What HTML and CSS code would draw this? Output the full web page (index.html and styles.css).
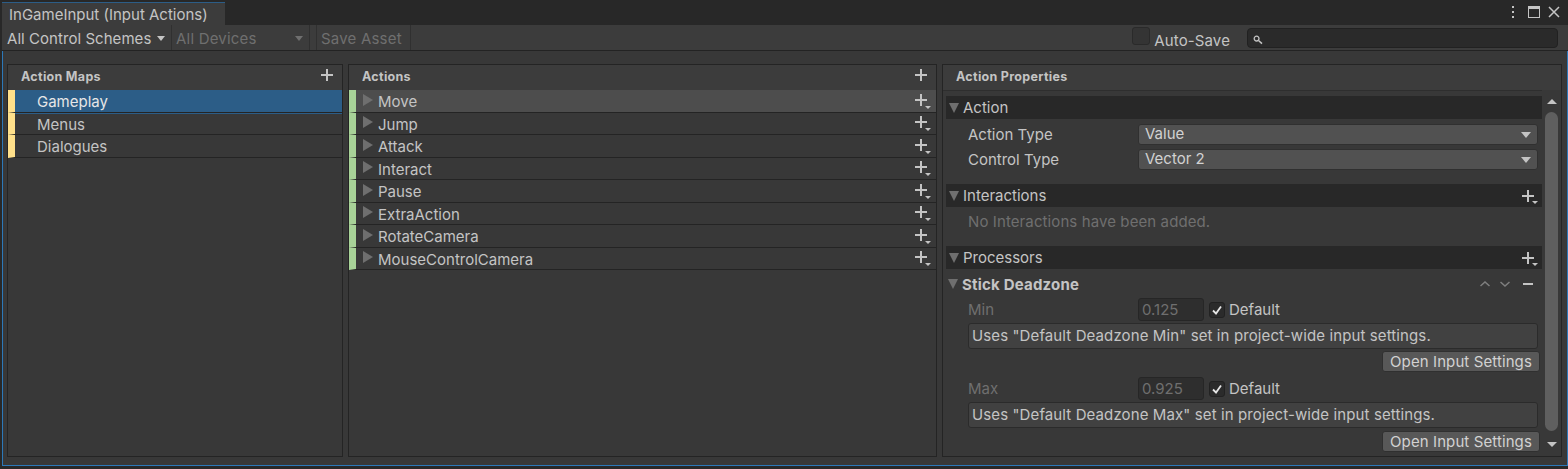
FILE: index.html
```html
<!DOCTYPE html>
<html lang="en">
<head>
  <meta charset="UTF-8">
  <title>InGameInput (Input Actions)</title>
  <link rel="stylesheet" href="styles.css">
</head>
<body>
  <div class="window">
    <div class="tabbar">
      <div class="tab">InGameInput (Input Actions)</div>
      <div class="win-icons">
        <svg class="dots" width="4" height="12" viewBox="0 0 4 12"><rect x="1" y="0" width="2" height="2" fill="#c4c4c4"/><rect x="1" y="5" width="2" height="2" fill="#c4c4c4"/><rect x="1" y="10" width="2" height="2" fill="#c4c4c4"/></svg>
        <svg width="12" height="12" viewBox="0 0 12 12"><rect x="0.5" y="0.5" width="11" height="11" fill="none" stroke="#c4c4c4"/><rect x="0" y="0" width="12" height="3" fill="#c4c4c4"/></svg>
        <svg width="12" height="12" viewBox="0 0 12 12"><path d="M1 1L11 11M11 1L1 11" stroke="#c4c4c4" stroke-width="1.5" fill="none"/></svg>
      </div>
    </div>

    <div class="toolbar">
      <div class="tool tool-schemes">All Control Schemes<i class="caret"></i></div>
      <div class="tool tool-devices off">All Devices<i class="caret dim"></i></div>
      <div class="tool tool-save off">Save Asset</div>
      <div class="autosave"><span class="box"></span><span class="autosave-label">Auto-Save</span></div>
      <div class="search">
        <svg width="10" height="10" viewBox="0 0 10 10"><circle cx="3.6" cy="3.6" r="2.4" fill="none" stroke="#c4c4c4" stroke-width="1.3"/><path d="M5.5 5.5L9 8.6" stroke="#c4c4c4" stroke-width="1.6"/></svg>
      </div>
    </div>

    <div class="panels">
      <section class="panel maps">
        <div class="panel-head"><span>Action Maps</span><span class="plus"></span></div>
        <div class="row map selected">Gameplay</div>
        <div class="row map">Menus</div>
        <div class="row map">Dialogues</div>
      </section>

      <section class="panel actions">
        <div class="panel-head"><span>Actions</span><span class="plus"></span></div>
        <div class="row action hover"><i class="arrow"></i>Move<span class="plus small"></span></div>
        <div class="row action"><i class="arrow"></i>Jump<span class="plus small"></span></div>
        <div class="row action"><i class="arrow"></i>Attack<span class="plus small"></span></div>
        <div class="row action"><i class="arrow"></i>Interact<span class="plus small"></span></div>
        <div class="row action"><i class="arrow"></i>Pause<span class="plus small"></span></div>
        <div class="row action"><i class="arrow"></i>ExtraAction<span class="plus small"></span></div>
        <div class="row action"><i class="arrow"></i>RotateCamera<span class="plus small"></span></div>
        <div class="row action"><i class="arrow"></i>MouseControlCamera<span class="plus small"></span></div>
      </section>

      <section class="panel props">
        <div class="panel-head"><span>Action Properties</span></div>
        <div class="props-body">
          <div class="props-scroll">
            <div class="foldbar"><i class="arrow down"></i>Action</div>
            <div class="field first"><label>Action Type</label><div class="select">Value<i class="caret"></i></div></div>
            <div class="field"><label>Control Type</label><div class="select">Vector 2<i class="caret"></i></div></div>

            <div class="foldbar bar-interactions"><i class="arrow down"></i>Interactions<span class="plus small"></span></div>
            <div class="none-msg">No Interactions have been added.</div>

            <div class="foldbar bar-processors"><i class="arrow down"></i>Processors<span class="plus small"></span></div>
            <div class="processor">
              <i class="arrow down"></i><b>Stick Deadzone</b>
              <div class="proc-btns">
                <svg width="10" height="6" viewBox="0 0 10 6"><path d="M0.5 5L5 1L9.5 5" fill="none" stroke="#7f7f7f" stroke-width="1.5"/></svg>
                <svg width="10" height="6" viewBox="0 0 10 6"><path d="M0.5 1L5 5L9.5 1" fill="none" stroke="#7f7f7f" stroke-width="1.5"/></svg>
                <svg class="minus" width="10" height="2" viewBox="0 0 10 2"><rect width="10" height="2" fill="#c4c4c4"/></svg>
              </div>
            </div>

            <div class="param">
              <label class="off">Min</label>
              <div class="num off">0.125</div>
              <span class="check"><svg width="12" height="12" viewBox="0 0 12 12"><path d="M2 6.5L5 9.5L10 2.5" fill="none" stroke="#e6e6e6" stroke-width="1.8"/></svg></span>
              <span>Default</span>
            </div>
            <div class="help">Uses "Default Deadzone Min" set in project-wide input settings.</div>
            <div class="btn-line"><div class="btn">Open Input Settings</div></div>

            <div class="param param-max">
              <label class="off">Max</label>
              <div class="num off">0.925</div>
              <span class="check"><svg width="12" height="12" viewBox="0 0 12 12"><path d="M2 6.5L5 9.5L10 2.5" fill="none" stroke="#e6e6e6" stroke-width="1.8"/></svg></span>
              <span>Default</span>
            </div>
            <div class="help">Uses "Default Deadzone Max" set in project-wide input settings.</div>
            <div class="btn-line last"><div class="btn">Open Input Settings</div></div>
          </div>
          <div class="scrollbar">
            <i class="sb-up"></i>
            <div class="thumb"></div>
            <i class="sb-down"></i>
          </div>
        </div>
      </section>
    </div>
  </div>
</body>
</html>
```

FILE: styles.css
```css
* {
  box-sizing: border-box;
}
html, body {
  margin: 0;
  height: 100%;
  overflow: hidden;
  background: #282828;
}
body {
  font-family: Inter, "Liberation Sans", sans-serif;
  font-size: 15px;
  color: #c4c4c4;
}
.window {
  width: 1568px;
  height: 466px;
  margin: 0;
  border-left: 2px solid #282828;
  display: flex;
  flex-direction: column;
  background: #383838;
  box-shadow: inset 1px 0 0 #2c78b8, inset -1px 0 0 #2c78b8, inset 0 -1px 0 #2c78b8;
}
.tabbar {
  height: 25px;
  flex: none;
  background: #282828;
  display: flex;
  align-items: flex-end;
  padding-right: 8px;
}
.tab {
  width: 223px;
  height: 23px;
  background: #3c3c3c;
  border-top: 1px solid #2c5d87;
  padding: 2px 0 0 7px;
  line-height: 20px;
}
.win-icons {
  margin-left: auto;
  align-self: flex-start;
  display: flex;
  align-items: center;
  gap: 8px;
  padding-top: 6px;
}
.dots {
  margin-right: 5px;
}
.toolbar {
  height: 26px;
  flex: none;
  background: #3c3c3c;
  border-bottom: 1px solid #232323;
  display: flex;
  align-items: stretch;
  padding-right: 10px;
}
.tool {
  padding: 2px 0 0 5px;
  line-height: 24px;
  display: flex;
  align-items: center;
  border-right: 1px solid #303030;
}
.tool-schemes {
  width: 170px;
  letter-spacing: 0.05px;
}
.tool-devices {
  width: 138px;
  padding-left: 4px;
  letter-spacing: 0.2px;
  border-right: 1px solid #303030;
}
.tool-save {
  margin-left: 6px;
  width: 95px;
  padding-left: 4px;
  letter-spacing: 0.2px;
  border-left: 1px solid #303030;
}
.off {
  color: #6f6f6f;
}
.caret {
  display: inline-block;
  flex: none;
  width: 0;
  height: 0;
  border-left: 5px solid transparent;
  border-right: 5px solid transparent;
  border-top: 6px solid #c4c4c4;
  margin-left: auto;
  margin-right: 4px;
}
.tool .caret {
  border-left-width: 4.5px;
  border-right-width: 4.5px;
  border-top-width: 5px;
  margin-right: 6px;
}
.caret.dim {
  border-top-color: #6f6f6f;
}
.autosave {
  margin-left: auto;
  display: flex;
  align-items: flex-start;
}
.box {
  width: 18px;
  height: 18px;
  margin-top: 2px;
  border: 1px solid #2a2a2a;
  border-radius: 3px;
  background: #343434;
}
.autosave-label {
  margin-left: 4px;
  line-height: 26px;
  padding-top: 3px;
  letter-spacing: 0.12px;
}
.search {
  width: 311px;
  height: 20px;
  margin: 3px 0 0 17px;
  background: #2a2a2a;
  border: 1px solid #212121;
  border-radius: 4px;
  padding: 1px 0 0 5px;
}
.panels {
  display: flex;
  gap: 5px;
  padding: 13px 5px 8px 5px;
  height: 392px;
  flex: none;
  margin-bottom: 0;
}
.panel {
  border: 1px solid #242424;
  background: #383838;
  display: flex;
  flex-direction: column;
  height: 393px;
}
.maps {
  width: 336px;
}
.actions {
  width: 589px;
}
.props {
  width: 620px;
}
.panel-head {
  height: 25.25px;
  flex: none;
  background: #3c3c3c;
  font-size: 12.5px;
  font-weight: 700;
  display: flex;
  align-items: center;
  justify-content: space-between;
  padding: 0 9px 2px 13px;
  color: #c4c4c4;
  letter-spacing: 0.3px;
}
.plus {
  width: 12px;
  height: 12px;
  flex: none;
  margin-top: -3px;
  background:
    linear-gradient(#c4c4c4, #c4c4c4) center / 12px 2px no-repeat,
    linear-gradient(#c4c4c4, #c4c4c4) center / 2px 12px no-repeat;
}
.plus.small {
  position: relative;
  margin: -4px 9px 0 auto;
}
.plus.small::after {
  content: "";
  position: absolute;
  left: 10px;
  top: 12px;
  border-left: 3px solid transparent;
  border-right: 3px solid transparent;
  border-top: 3px solid #c4c4c4;
}
.row {
  height: 22.5px;
  flex: none;
  display: flex;
  align-items: center;
  border-left: 7px solid #ffe08a;
  border-bottom: 1px solid #242424;
  padding-bottom: 0;
}
.map {
  padding-left: 22px;
  padding-top: 1px;
}
.map.selected {
  background: #2c5d87;
  color: #e6e6e6;
  box-shadow: 0 1px 0 #2c5d87;
}
.action {
  border-left-color: #a8d398;
  padding-left: 7px;
  padding-top: 1px;
}
.action.hover {
  background: #4d4d4d;
}
.arrow {
  width: 0;
  height: 0;
  flex: none;
  border-top: 6px solid transparent;
  border-bottom: 6px solid transparent;
  border-left: 10px solid #6f6f6f;
  margin: -4px 5px 0 0;
}
.arrow.down {
  border-left: 5.5px solid transparent;
  border-right: 5.5px solid transparent;
  border-top: 10px solid #6f6f6f;
  border-bottom: 0;
  margin: 0 4px 0 0;
}
.props-body {
  flex: 1;
  display: flex;
  min-height: 0;
}
.props-scroll {
  width: 599px;
  padding: 5px 0 0 3px;
  border-top: 1px solid #2e2e2e;
}
.foldbar {
  height: 23px;
  background: #282828;
  display: flex;
  align-items: center;
  padding-left: 3px;
}
.foldbar .plus.small {
  margin: 0 8px 0 auto;
}
.foldbar .plus.small::after {
  top: 11px;
}
.field {
  height: 21px;
  margin-top: 4px;
  display: flex;
  align-items: center;
  padding-left: 22px;
}
.field.first {
  margin-top: 5px;
}
.field label {
  width: 170px;
}
.select {
  width: 400px;
  height: 21px;
  background: #515151;
  border: 1px solid #303030;
  border-radius: 3px;
  padding: 0 6px 2px 6px;
  color: #d2d2d2;
  display: flex;
  align-items: center;
}
.select .caret {
  margin-right: 0;
  margin-top: 2px;
}
.bar-interactions {
  margin-top: 14px;
}
.none-msg {
  height: 30px;
  line-height: 30px;
  padding-left: 22px;
  color: #6f6f6f;
  letter-spacing: 0.1px;
}
.bar-processors {
  margin-top: 9px;
}
.processor {
  height: 29px;
  display: flex;
  align-items: center;
  padding: 1px 0 0 2px;
}
.processor b {
  font-weight: 700;
  letter-spacing: 0.2px;
}
.proc-btns {
  margin-left: auto;
  margin-right: 9px;
  display: flex;
  align-items: center;
  gap: 10px;
}
.minus {
  margin-left: 3px;
}
.param {
  height: 23px;
  margin-top: 0;
  display: flex;
  align-items: center;
  padding-left: 22px;
}
.param label {
  width: 170px;
}
.param-max {
  margin-top: 5px;
}
.num {
  width: 66px;
  height: 23px;
  background: #2e2e2e;
  border: 1px solid #262626;
  border-radius: 3px;
  padding-left: 3px;
  line-height: 21px;
}
.check {
  width: 16px;
  height: 16px;
  margin: 0 4px 0 5px;
  background: #2b2b2b;
  border: 1px solid #222;
  border-radius: 3px;
  display: flex;
  align-items: center;
  justify-content: center;
}
.help {
  height: 26px;
  margin: 2px 4px 0 22px;
  background: #414141;
  border: 1px solid #2b2b2b;
  border-radius: 3px;
  padding-left: 3px;
  line-height: 24px;
  letter-spacing: 0.11px;
}
.btn-line {
  display: flex;
  justify-content: flex-end;
  margin: 2px 2px 0 0;
}
.btn-line.last {
  margin-top: 3px;
}
.btn {
  width: 158px;
  height: 21px;
  background: #585858;
  border: 1px solid #303030;
  border-radius: 3px;
  color: #d2d2d2;
  text-align: center;
  line-height: 19px;
  letter-spacing: 0.1px;
}
.scrollbar {
  width: 19px;
  padding-top: 9px;
  display: flex;
  flex-direction: column;
  align-items: center;
}
.sb-up {
  flex: none;
  border-left: 5px solid transparent;
  border-right: 5px solid transparent;
  border-bottom: 5px solid #c4c4c4;
}
.thumb {
  flex: none;
  width: 13px;
  height: 319px;
  margin-top: 8px;
  background: #5f5f5f;
  border-radius: 7px;
}
.sb-down {
  flex: none;
  margin-top: 11px;
  border-left: 5px solid transparent;
  border-right: 5px solid transparent;
  border-top: 5px solid #c4c4c4;
}
```
